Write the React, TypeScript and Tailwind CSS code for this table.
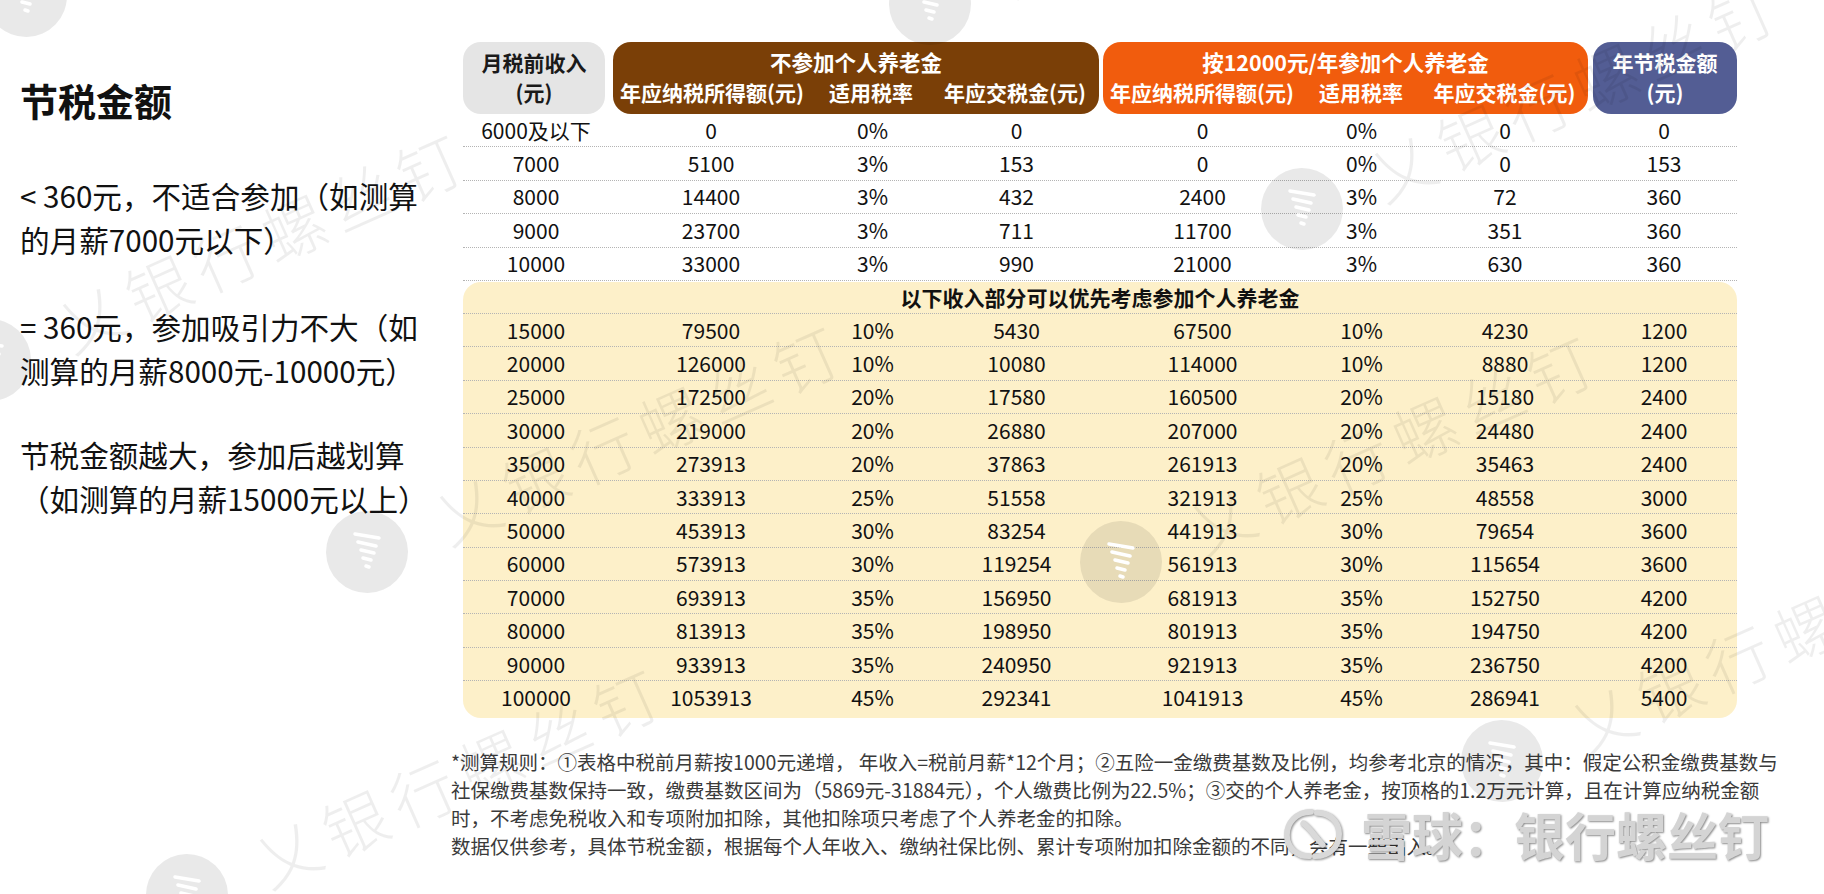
import React from "react";

const cols =
  "grid grid-cols-[146px_204px_119px_169px_203px_115px_172px_146px]";

const topRows = [
  ["6000及以下", "0", "0%", "0", "0", "0%", "0", "0"],
  ["7000", "5100", "3%", "153", "0", "0%", "0", "153"],
  ["8000", "14400", "3%", "432", "2400", "3%", "72", "360"],
  ["9000", "23700", "3%", "711", "11700", "3%", "351", "360"],
  ["10000", "33000", "3%", "990", "21000", "3%", "630", "360"],
];

const yellowRows = [
  ["15000", "79500", "10%", "5430", "67500", "10%", "4230", "1200"],
  ["20000", "126000", "10%", "10080", "114000", "10%", "8880", "1200"],
  ["25000", "172500", "20%", "17580", "160500", "20%", "15180", "2400"],
  ["30000", "219000", "20%", "26880", "207000", "20%", "24480", "2400"],
  ["35000", "273913", "20%", "37863", "261913", "20%", "35463", "2400"],
  ["40000", "333913", "25%", "51558", "321913", "25%", "48558", "3000"],
  ["50000", "453913", "30%", "83254", "441913", "30%", "79654", "3600"],
  ["60000", "573913", "30%", "119254", "561913", "30%", "115654", "3600"],
  ["70000", "693913", "35%", "156950", "681913", "35%", "152750", "4200"],
  ["80000", "813913", "35%", "198950", "801913", "35%", "194750", "4200"],
  ["90000", "933913", "35%", "240950", "921913", "35%", "236750", "4200"],
  ["100000", "1053913", "45%", "292341", "1041913", "45%", "286941", "5400"],
];

// faint diagonal watermarks, placed by the circle's top-left corner
const marks = [
  "left-[-51px] top-[319px]",
  "left-[326px] top-[511px]",
  "left-[146px] top-[854px]",
  "left-[-15px] top-[-45px]",
  "left-[889px] top-[-37px]",
  "left-[1261px] top-[168px]",
  "left-[1080px] top-[521px]",
  "left-[1461px] top-[720px]",
];

const Row = ({ cells, last }: { cells: string[]; last?: boolean }) => (
  <div
    className={`${cols} h-[33.4px] items-center ${
      last ? "" : "border-b border-dotted border-[#b4b4b4]"
    }`}
  >
    {cells.map((c, i) => (
      <div key={i} className="text-center leading-none">
        {c}
      </div>
    ))}
  </div>
);

const SubHeads = ({ grid }: { grid: string }) => (
  <div className={`grid ${grid} mt-[2px] text-[21px]`}>
    <span className="text-center">年应纳税所得额(元)</span>
    <span className="text-center">适用税率</span>
    <span className="text-center">年应交税金(元)</span>
  </div>
);

const Mark = ({ pos }: { pos: string }) => (
  <div
    className={`pointer-events-none absolute ${pos} flex items-center origin-[41px_41px] -rotate-[24deg] text-[64px] font-light leading-none text-black/[0.065]`}
  >
    <div className="flex h-[82px] w-[82px] shrink-0 items-center justify-center rounded-full bg-black/[0.085]">
      <svg width="30" height="46" viewBox="0 0 30 46" className="rotate-[24deg]">
        <g stroke="#fff" strokeWidth="3.5" strokeLinecap="round">
          <path d="M3 5 L27 9" />
          <path d="M6 13 L24 17" />
          <path d="M9 21 L22 24" />
          <path d="M11 29 L19 31" />
          <path d="M14 37 L17 38" />
        </g>
      </svg>
    </div>
    <span className="ml-[36px]">乂</span>
    <span className="ml-[10px] tracking-[10px] whitespace-nowrap">银行螺丝钉</span>
  </div>
);

export default function App() {
  return (
    <div className="relative h-[894px] w-[1824px] overflow-hidden bg-white font-['Noto_Sans_CJK_SC','Noto_Sans',sans-serif] text-[#111]">
      <div className="flex">
        {/* left notes */}
        <aside className="w-[463px] shrink-0 pl-[20px] pt-[77px]">
          <h1 className="text-[38px] font-bold leading-[46px]">节税金额</h1>
          <div className="mt-[51px] text-[29.6px] leading-[44px] whitespace-nowrap">
            <p>
              &lt; 360元，不适合参加（如测算
              <br />
              的月薪7000元以下）
            </p>
            <p className="mt-[43px]">
              = 360元，参加吸引力不大（如
              <br />
              测算的月薪8000元-10000元）
            </p>
            <p className="mt-[40px]">
              节税金额越大，参加后越划算
              <br />
              （如测算的月薪15000元以上）
            </p>
          </div>
        </aside>

        {/* table */}
        <main className="w-[1274px] shrink-0 pt-[42px]">
          <div className={`${cols} h-[72px] font-bold leading-[28px]`}>
            <div className="mr-[4px] flex flex-col items-center rounded-[18px] bg-[#e5e5e5] pt-[6px] text-[21px] text-[#1a1a1a]">
              <span>月税前收入</span>
              <span className="mt-[2px]">(元)</span>
            </div>
            <div className="col-span-3 ml-[4px] mr-[2px] flex flex-col rounded-[18px] bg-[#7a3f07] pt-[6px] text-white">
              <span className="text-center text-[21.5px]">不参加个人养老金</span>
              <SubHeads grid="grid-cols-[198px_120px_168px]" />
            </div>
            <div className="col-span-3 ml-[2px] mr-[3px] flex flex-col rounded-[18px] bg-[#f15c0d] pt-[6px] text-white">
              <span className="text-center text-[21.5px]">按12000元/年参加个人养老金</span>
              <SubHeads grid="grid-cols-[198px_120px_167px]" />
            </div>
            <div className="ml-[2px] flex flex-col items-center rounded-[18px] bg-[#535d94] pt-[6px] text-[21px] text-white">
              <span>年节税金额</span>
              <span className="mt-[2px]">(元)</span>
            </div>
          </div>

          <div className="text-[21px]">
            {topRows.map((r, i) => (
              <Row key={i} cells={r} />
            ))}
          </div>

          <div className="mt-[1px] rounded-[18px] bg-[#fdf0c9] pb-[3px] text-[21px]">
            <div className="flex h-[32px] items-center justify-center border-b border-dotted border-[#b4b4b4] font-bold">
              以下收入部分可以优先考虑参加个人养老金
            </div>
            {yellowRows.map((r, i) => (
              <Row key={i} cells={r} last={i === yellowRows.length - 1} />
            ))}
          </div>

          <div className="-ml-[12px] mt-[30px] text-[19.5px] leading-[28px] whitespace-nowrap text-[#3a3a3a]">
            <p>
              *测算规则：①表格中税前月薪按1000元递增， 年收入=税前月薪*12个月；②五险一金缴费基数及比例，均参考北京的情况，其中：假定公积金缴费基数与
            </p>
            <p>
              社保缴费基数保持一致，缴费基数区间为（5869元-31884元），个人缴费比例为22.5%；③交的个人养老金，按顶格的1.2万元计算，且在计算应纳税金额
            </p>
            <p>时，不考虑免税收入和专项附加扣除，其他扣除项只考虑了个人养老金的扣除。</p>
            <p>
              数据仅供参考，具体节税金额，根据每个人年收入、缴纳社保比例、累计专项附加扣除金额的不同，会有一些出入。
            </p>
          </div>
        </main>
      </div>

      {marks.map((m, i) => (
        <Mark key={i} pos={m} />
      ))}

      {/* xueqiu signature */}
      <div className="pointer-events-none absolute left-[1282px] top-[806px] flex items-center">
        <svg width="62" height="56" viewBox="0 0 64 58" className="drop-shadow-[1px_1px_1px_rgba(0,0,0,0.45)]">
          <g fill="none" stroke="#d9d9d9" strokeWidth="6" strokeLinecap="round">
            <path d="M30 6 C14 6 5 18 5 30 C5 43 15 52 28 52" />
            <path d="M34 52 C50 52 59 41 59 29 C59 16 49 7 36 7" />
            <path d="M22 18 C30 24 34 32 42 40" />
          </g>
        </svg>
        <span className="ml-[17px] text-[51px] font-bold leading-none text-[#d4d4d4] [text-shadow:1px_1px_2px_rgba(0,0,0,0.45)]">
          雪球：银行螺丝钉
        </span>
      </div>
    </div>
  );
}
